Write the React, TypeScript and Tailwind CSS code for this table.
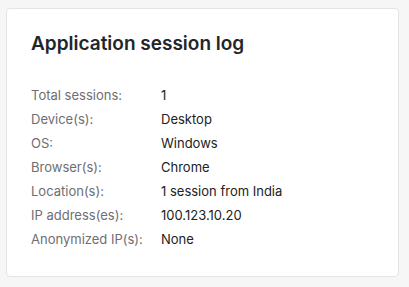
const rows: [string, string][] = [
  ['Total sessions:', '1'],
  ['Device(s):', 'Desktop'],
  ['OS:', 'Windows'],
  ['Browser(s):', 'Chrome'],
  ['Location(s):', '1 session from India'],
  ['IP address(es):', '100.123.10.20'],
  ['Anonymized IP(s):', 'None'],
];

export default function App() {
  return (
    <div
      className="w-[409px] h-[287px] bg-[#f6f6f6] pt-2 pl-[6px]"
      style={{ fontFamily: 'Inter, "Noto Sans", sans-serif' }}
    >
      <div className="w-[393px] h-[269px] bg-white border border-[#e4e4e4] rounded-[4px] pl-6 pt-[21px]">
        <h2 className="text-[19px] leading-[28px] font-semibold text-[#22262b]">
          Application session log
        </h2>
        <div className="mt-[25px] flex flex-col">
          {rows.map(([label, value]) => (
            <div key={label} className="flex text-[13px] leading-[24px]">
              <div className="w-[130px] text-[#6e6e73]">{label}</div>
              <div className="text-[#222]">{value}</div>
            </div>
          ))}
        </div>
      </div>
    </div>
  );
}
